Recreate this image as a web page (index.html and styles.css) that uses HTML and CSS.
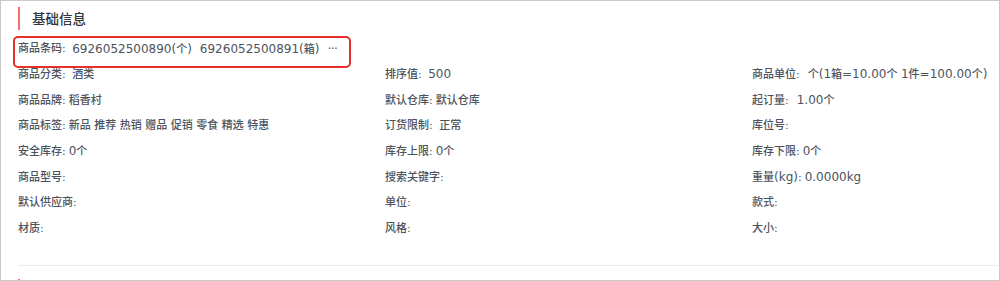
FILE: index.html
```html
<!DOCTYPE html>
<html lang="zh-CN">
<head>
<meta charset="utf-8">
<title>基础信息</title>
<link rel="stylesheet" href="styles.css">
</head>
<body>
<div class="frame">
  <h2 class="section-title">基础信息</h2>
  <div class="content">
    <div class="barcode">
      <span class="k">商品条码:</span>
      <span class="v w"><span class="n">6926052500890(</span>个<span class="n">)</span></span>
      <span class="v g"><span class="n">6926052500891(</span>箱<span class="n">)</span></span>
      <span class="v g more">···</span>
    </div>
    <div class="grid">
      <div class="item"><span class="k">商品分类:</span><span class="v w">酒类</span></div>
      <div class="item"><span class="k">排序值:</span><span class="v w"><span class="n">500</span></span></div>
      <div class="item"><span class="k">商品单位:</span><span class="v ww">个<span class="n">(1</span>箱<span class="n">=10.00</span>个 <span class="n">1</span>件<span class="n">=100.00</span>个<span class="n">)</span></span></div>

      <div class="item"><span class="k">商品品牌:</span><span class="v">稻香村</span></div>
      <div class="item"><span class="k">默认仓库:</span><span class="v">默认仓库</span></div>
      <div class="item"><span class="k">起订量:</span><span class="v ww"><span class="n">1.00</span>个</span></div>

      <div class="item"><span class="k">商品标签:</span><span class="v">新品 推荐 热销 赠品 促销 零食 精选 特惠</span></div>
      <div class="item"><span class="k">订货限制:</span><span class="v w">正常</span></div>
      <div class="item"><span class="k">库位号:</span></div>

      <div class="item"><span class="k">安全库存:</span><span class="v"><span class="n">0</span>个</span></div>
      <div class="item"><span class="k">库存上限:</span><span class="v"><span class="n">0</span>个</span></div>
      <div class="item"><span class="k">库存下限:</span><span class="v"><span class="n">0</span>个</span></div>

      <div class="item"><span class="k">商品型号:</span></div>
      <div class="item"><span class="k">搜索关键字:</span></div>
      <div class="item"><span class="k">重量<span class="n">(kg)</span>:</span><span class="v"><span class="n">0.0000kg</span></span></div>

      <div class="item"><span class="k">默认供应商:</span></div>
      <div class="item"><span class="k">单位:</span></div>
      <div class="item"><span class="k">款式:</span></div>

      <div class="item"><span class="k">材质:</span></div>
      <div class="item"><span class="k">风格:</span></div>
      <div class="item"><span class="k">大小:</span></div>
    </div>
  </div>
  <div class="divider"></div>
  <h2 class="section-title next"></h2>
</div>
</body>
</html>
```
FILE: styles.css
```css
html, body {
  margin: 0;
  background: #ffffff;
}

body {
  font-family: "DejaVu Sans", "Noto Sans CJK SC", sans-serif;
  font-size: 11px;
  font-weight: 500;
  color: #4d535d;
}

.frame {
  width: 1000px;
  height: 281px;
  box-sizing: border-box;
  border: 1px solid #c9c9c9;
  overflow: hidden;
  padding: 6px 1px 0 17px;
}

.section-title {
  margin: 0;
  height: 23px;
  line-height: 23px;
  border-left: 2px solid #f26d6b;
  padding-left: 12px;
  font-size: 13.5px;
  font-weight: 500;
  color: #33363c;
  font-family: "Noto Sans CJK SC", sans-serif;
}

.section-title.next {
  margin-top: 13px;
}

.content {
  margin-top: 6.5px;
}

.barcode {
  position: relative;
  height: 25.67px;
  display: flex;
  align-items: center;
  line-height: 16px;
  white-space: nowrap;
}

.barcode::after {
  content: "";
  position: absolute;
  left: -5px;
  top: -1px;
  width: 338px;
  height: 32.5px;
  box-sizing: border-box;
  border: 2px solid #e5302b;
  border-radius: 5px;
}

.grid {
  display: grid;
  grid-template-columns: 367px 367px 1fr;
  grid-auto-rows: 25.67px;
  align-items: center;
  line-height: 16px;
}

.item {
  white-space: nowrap;
}

.n {
  font-size: 12px;
}

.v {
  margin-left: 3px;
}

.v.w {
  margin-left: 6.5px;
}

.v.ww {
  margin-left: 8px;
}

.v.g {
  margin-left: 8px;
}

.more {
  font-size: 12px;
  letter-spacing: -0.5px;
}

.divider {
  height: 1px;
  background: #e8eaec;
  margin-top: 23px;
}
```
